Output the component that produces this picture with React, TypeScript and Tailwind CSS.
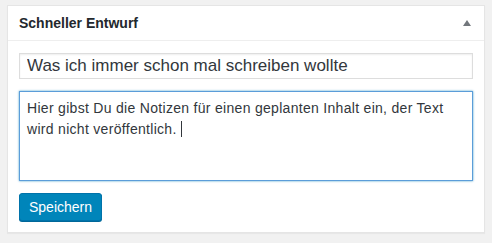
export default function App() {
  return (
    <div className="min-h-screen w-full bg-[#f1f1f1] pt-[5px] pl-[7px] font-['Liberation_Sans',Arial,sans-serif]">
      <div className="w-[478px] border border-[#e5e5e5] bg-white shadow-[0_1px_1px_rgba(0,0,0,0.04)]">
        {/* Header */}
        <div className="flex h-[35px] items-center justify-between border-b border-[#eeeeee] pl-[11px] pr-[13px]">
          <h2 className="pt-[1px] text-[14px] font-bold text-[#23282d]">Schneller Entwurf</h2>
          <svg width="8" height="6" viewBox="0 0 8 6" className="mb-[1px]">
            <path d="M4 0 L8 6 L0 6 Z" fill="#72777c" />
          </svg>
        </div>

        {/* Body */}
        <div className="flex flex-col gap-[12px] px-[11px] pt-[12px] pb-[11px]">
          <input
            type="text"
            readOnly
            value="Was ich immer schon mal schreiben wollte"
            className="h-[26px] w-[454px] border border-[#dddddd] px-[7px] text-[17px] text-[#32373c] shadow-[inset_0_1px_2px_rgba(0,0,0,0.07)] outline-none"
          />
          <div className="h-[90px] w-[454px] border border-[#5b9dd9] px-[7px] pt-[6px] text-[14px] leading-[20px] tracking-[0.3px] text-[#32373c] shadow-[0_0_2px_rgba(30,140,190,0.8)]">
            Hier gibst Du die Notizen für einen geplanten Inhalt ein, der Text wird nicht veröffentlich.{' '}
            <span className="inline-block h-[16px] w-px translate-y-[3px] bg-[#32373c]" />
          </div>
          <div>
            <button className="h-[28px] w-[83px] rounded-[3px] border border-[#0073aa] bg-[#0085ba] text-[14px] text-white shadow-[0_1px_0_#006799]">
              Speichern
            </button>
          </div>
        </div>
      </div>
    </div>
  )
}
